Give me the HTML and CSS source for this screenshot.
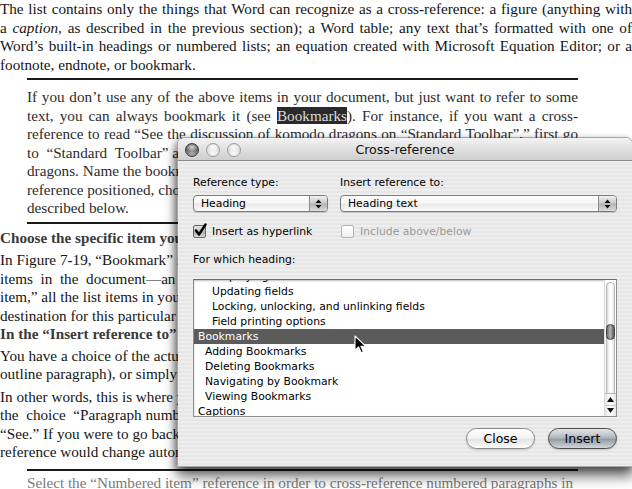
FILE: index.html
```html
<!DOCTYPE html>
<html>
<head>
<meta charset="utf-8">
<link rel="stylesheet" href="styles.css">
</head>
<body>
<div class="page">
  <p class="para intro">
    <span class="ln">The list contains only the things that Word can recognize as a cross-reference: a figure (anything with</span>
    <span class="ln">a <i>caption,</i> as described in the previous section); a Word table; any text that’s formatted with one of</span>
    <span class="ln">Word’s built-in headings or numbered lists; an equation created with Microsoft Equation Editor; or a</span>
    <span class="ln end">footnote, endnote, or bookmark.</span>
  </p>
  <div class="note">
    <span class="ln">If you don’t use any of the above items in your document, but just want to refer to some</span>
    <span class="ln">text, you can always bookmark it (see <span class="hl">Bookmarks</span>). For instance, if you want a cross-</span>
    <span class="ln">reference to read “See the discussion of komodo dragons on “Standard Toolbar”,” first go</span>
    <span class="ln end">to&nbsp;&nbsp;“Standard&nbsp;&nbsp;Toolbar” and select the paragraph about komodo</span>
    <span class="ln end">dragons. Name the bookmark and click Add. Then, with the insertion point</span>
    <span class="ln end">reference positioned, choose Insert → Reference → Cross-reference, as</span>
    <span class="ln end">described below.</span>
  </div>
  <p class="head">Choose the specific item you want to refer to.</p>
  <p class="para">
    <span class="ln end">In Figure 7-19, “Bookmark” is selected, so the list shows all the bookmarked</span>
    <span class="ln end">items&nbsp;&nbsp;in&nbsp;&nbsp;the&nbsp;&nbsp;document—an index of sorts. If you chose “Numbered</span>
    <span class="ln end">item,” all the list items in your document would appear here. Click the</span>
    <span class="ln end">destination for this particular cross-reference.</span>
  </p>
  <p class="head tight">In the “Insert reference to” pop-up menu, choose how to identify it.</p>
  <p class="para">
    <span class="ln end">You have a choice of the actual text of the heading (or the number of an</span>
    <span class="ln end">outline paragraph), or simply its page number.</span>
  </p>
  <p class="para">
    <span class="ln end">In other words, this is where you specify what appears after the word</span>
    <span class="ln end">the&nbsp;&nbsp;choice&nbsp;&nbsp;“Paragraph number” would produce text like this:</span>
    <span class="ln end">“See.” If you were to go back and change the heading, the cross-</span>
    <span class="ln end">reference would change automatically.</span>
  </p>
  <div class="note note-last">
    <span class="ln end">Select the “Numbered item” reference in order to cross-reference numbered paragraphs in</span>
  </div>
</div>

<div class="dialog">
  <div class="titlebar">
    <div class="lights">
      <span class="light dark"></span>
      <span class="light"></span>
      <span class="light"></span>
    </div>
    <div class="title">Cross-reference</div>
    <div></div>
  </div>
  <div class="dbody">
    <div class="cols">
      <div class="field">
        <div class="label">Reference type:</div>
        <div class="popup">
          <span class="ptext">Heading</span>
          <span class="parrows"><svg width="7" height="10" viewBox="0 0 7 10"><path d="M3.5 0.5 L6.5 4 L0.5 4 Z M3.5 9.5 L6.5 6 L0.5 6 Z" fill="#111"/></svg></span>
        </div>
      </div>
      <div class="field">
        <div class="label">Insert reference to:</div>
        <div class="popup">
          <span class="ptext">Heading text</span>
          <span class="parrows"><svg width="7" height="10" viewBox="0 0 7 10"><path d="M3.5 0.5 L6.5 4 L0.5 4 Z M3.5 9.5 L6.5 6 L0.5 6 Z" fill="#111"/></svg></span>
        </div>
      </div>
    </div>
    <div class="cols checks">
      <label class="check">
        <span class="box on"><svg width="15" height="15" viewBox="0 0 15 15"><path d="M3 7.5 L6 11.5 L12.5 1.5" fill="none" stroke="#000" stroke-width="2.4" stroke-linecap="round" stroke-linejoin="round"/></svg></span>
        <span>Insert as hyperlink</span>
      </label>
      <label class="check disabled">
        <span class="box"></span>
        <span>Include above/below</span>
      </label>
    </div>
    <div class="label which">For which heading:</div>
    <div class="listbox">
      <div class="rows">
        <div class="row l3 partial">Displaying field codes</div>
        <div class="row l3">Updating fields</div>
        <div class="row l3">Locking, unlocking, and unlinking fields</div>
        <div class="row l3">Field printing options</div>
        <div class="row l1 sel">Bookmarks</div>
        <div class="row l2">Adding Bookmarks</div>
        <div class="row l2">Deleting Bookmarks</div>
        <div class="row l2">Navigating by Bookmark</div>
        <div class="row l2">Viewing Bookmarks</div>
        <div class="row l1">Captions</div>
      </div>
      <div class="scrollbar">
        <div class="track"><div class="thumb"></div></div>
        <div class="arrows">
          <span class="arr"><svg width="7" height="5" viewBox="0 0 7 5"><path d="M3.5 0 L7 5 L0 5 Z" fill="#111"/></svg></span>
          <span class="arr"><svg width="7" height="5" viewBox="0 0 7 5"><path d="M3.5 5 L7 0 L0 0 Z" fill="#111"/></svg></span>
        </div>
      </div>
    </div>
    <div class="buttons">
      <button class="btn">Close</button>
      <button class="btn default">Insert</button>
    </div>
  </div>
</div>

<svg class="cursor" width="13" height="19" viewBox="0 0 13 19">
  <path d="M1 1 L1 15.5 L4.6 12 L7.2 17.8 L9.4 16.8 L6.9 11.2 L11.6 11.2 Z" fill="#000" stroke="#fff" stroke-width="1.1" stroke-linejoin="round"/>
</svg>
</body>
</html>
```

FILE: styles.css
```css
* { box-sizing: border-box; }

html, body {
  margin: 0;
  padding: 0;
}

body {
  position: relative;
  width: 632px;
  height: 489px;
  overflow: hidden;
  background: #fff;
  font-family: "Liberation Serif", "Times New Roman", serif;
  font-size: 15.2px;
  line-height: 18.5px;
  color: #151515;
}

.page {
  display: flex;
  flex-direction: column;
}

.para {
  margin: 0;
}

.ln {
  display: block;
  text-align: justify;
  text-align-last: justify;
  word-spacing: -1.5px;
}

.ln.end {
  text-align-last: left;
  white-space: nowrap;
  word-spacing: normal;
}

.intro {
  margin-bottom: 4px;
}

.note {
  margin-left: 27px;
  width: 551px;
  border-top: 2px solid #1a1a1a;
  border-bottom: 2px solid #1a1a1a;
  padding: 8px 0 4px;
  color: #2c2c2c;
}

.hl {
  background: #2a2a2a;
  color: #dcdcdc;
  word-spacing: normal;
}

.head {
  margin: 5px 0 4px;
  font-weight: bold;
  color: #3a3a3a;
  white-space: nowrap;
}

.head.tight {
  margin-top: 0;
  margin-bottom: 3px;
}

.page > .para + .para {
  margin-top: 4px;
}

.note-last {
  margin-top: 7px;
  border-bottom: 0;
  padding-top: 3px;
  color: #7a7a7a;
}

/* ---------- dialog ---------- */

.dialog {
  position: absolute;
  left: 177px;
  top: 137px;
  width: 456px;
  height: 330px;
  display: flex;
  flex-direction: column;
  border: 1px solid rgba(0, 0, 0, 0.35);
  border-radius: 7px 7px 0 0;
  box-shadow: 0 9px 13px rgba(0, 0, 0, 0.62), -2px 2px 6px rgba(0, 0, 0, 0.3);
  font-family: "DejaVu Sans", Verdana, sans-serif;
  color: #000;
  overflow: hidden;
}

.titlebar {
  flex: none;
  height: 23px;
  display: grid;
  grid-template-columns: 1fr auto 1fr;
  align-items: center;
  background: linear-gradient(#f3f3f3, #e2e2e2 45%, #cfcfcf);
  border-bottom: 1px solid #8a8a8a;
}

.lights {
  display: flex;
  gap: 7px;
  padding-left: 7px;
  padding-top: 1px;
}

.light {
  width: 14px;
  height: 14px;
  border-radius: 50%;
  border: 1px solid #9c9c9c;
  background:
    radial-gradient(ellipse 55% 35% at 50% 25%, rgba(255, 255, 255, 0.95), rgba(255, 255, 255, 0) 100%),
    radial-gradient(circle at 50% 75%, #fbfbfb, #d6d6d6 70%, #c4c4c4);
}

.light.dark {
  border-color: #3c3c3c;
  background:
    radial-gradient(ellipse 55% 35% at 50% 25%, rgba(255, 255, 255, 0.75), rgba(255, 255, 255, 0) 100%),
    radial-gradient(circle at 50% 80%, #b0b0b0, #5e5e5e 65%, #3e3e3e);
}

.title {
  font-size: 12.6px;
  line-height: 16px;
  color: #111;
  padding-top: 1px;
}

.dbody {
  flex: 1;
  padding: 15px 15px 0;
  background: repeating-linear-gradient(#eeeeee 0 2px, #e6e6e6 2px 4px);
  font-size: 10.8px;
  line-height: 13px;
  display: flex;
  flex-direction: column;
}

.cols {
  display: grid;
  grid-template-columns: 135px 1fr;
  column-gap: 12px;
}

.label {
  height: 13px;
  white-space: nowrap;
}

.popup {
  margin-top: 6px;
  height: 17px;
  display: flex;
  align-items: stretch;
  border: 1px solid #7c7c7c;
  border-radius: 4px;
  overflow: hidden;
  background: linear-gradient(#ffffff, #f6f6f6 45%, #e9e9e9 55%, #fbfbfb);
  box-shadow: 0 1px 1px rgba(0, 0, 0, 0.15);
}

.ptext {
  flex: 1;
  padding-left: 7px;
  line-height: 15px;
  white-space: nowrap;
}

.parrows {
  width: 18px;
  display: flex;
  align-items: center;
  justify-content: center;
  border-left: 1px solid #8a8a8a;
  background: linear-gradient(#f0f0f0, #c9c9c9 48%, #b2b2b2 52%, #dcdcdc);
}

.checks {
  margin-top: 13px;
}

.check {
  display: flex;
  align-items: center;
  gap: 6px;
  height: 13px;
  white-space: nowrap;
}

.check.disabled {
  color: #9a9a9a;
  padding-left: 1px;
}

.box {
  position: relative;
  width: 13px;
  height: 13px;
  flex: none;
  border: 1px solid #b4b4b4;
  border-radius: 2px;
  background: linear-gradient(#ffffff, #f1f1f1);
}

.box.on {
  border-color: #666;
  background: linear-gradient(#e8e8e8, #b9b9b9 50%, #a9a9a9 52%, #d9d9d9);
}

.box svg {
  position: absolute;
  left: -1px;
  top: -3px;
}

.which {
  margin-top: 15px;
}

.listbox {
  margin-top: 13px;
  height: 138px;
  display: flex;
  border: 1px solid #8e8e8e;
  border-top-color: #6e6e6e;
  background: #fff;
  box-shadow: inset 0 1px 2px rgba(0, 0, 0, 0.25);
  overflow: hidden;
}

.rows {
  flex: 1;
  overflow: hidden;
}

.row {
  height: 15px;
  line-height: 15px;
  white-space: nowrap;
}

.row.partial {
  margin-top: -11px;
}

.row.l1 { padding-left: 4px; }
.row.l2 { padding-left: 11px; }
.row.l3 { padding-left: 18px; }

.row.sel {
  background: #5b5b5b;
  color: #fff;
}

.scrollbar {
  width: 12px;
  flex: none;
  display: flex;
  flex-direction: column;
  background: #fff;
  border-left: 1px solid #d8d8d8;
}

.track {
  flex: 1;
  margin: 2px 1px 0;
  border: 1px solid #b8b8b8;
  border-radius: 5px 5px 0 0;
  border-bottom: 0;
  background: linear-gradient(90deg, #d9d9d9, #fdfdfd 35%, #ffffff 65%, #e4e4e4);
}

.thumb {
  margin-top: 41px;
  margin-left: -1px;
  margin-right: -1px;
  height: 16px;
  border: 1px solid #3c3c3c;
  border-radius: 5px;
  background: linear-gradient(90deg, #6a6a6a, #b6b6b6 45%, #8a8a8a 70%, #5c5c5c);
}

.arrows {
  height: 23px;
  display: flex;
  flex-direction: column;
  border-top: 1px solid #b8b8b8;
}

.arr {
  flex: 1;
  display: flex;
  align-items: center;
  justify-content: center;
  background: linear-gradient(90deg, #e6e6e6, #ffffff 50%, #e6e6e6);
}

.arr + .arr {
  border-top: 1px solid #c8c8c8;
}

.buttons {
  margin-top: 11px;
  display: flex;
  justify-content: flex-end;
  gap: 13px;
}

.btn {
  width: 69px;
  height: 21px;
  padding: 0;
  border: 1px solid #8a8a8a;
  border-radius: 11px;
  font-family: "DejaVu Sans", Verdana, sans-serif;
  font-size: 12.5px;
  line-height: 18px;
  color: #000;
  background: linear-gradient(#ffffff, #f4f4f4 45%, #e3e3e3 55%, #ffffff);
  box-shadow: 0 1px 2px rgba(0, 0, 0, 0.2);
}

.btn.default {
  border-color: #4e4e4e;
  background: linear-gradient(#e4e6e9, #b4b8bd 45%, #979ca2 55%, #d3d6da);
}

.cursor {
  position: absolute;
  left: 354px;
  top: 335px;
}
```
